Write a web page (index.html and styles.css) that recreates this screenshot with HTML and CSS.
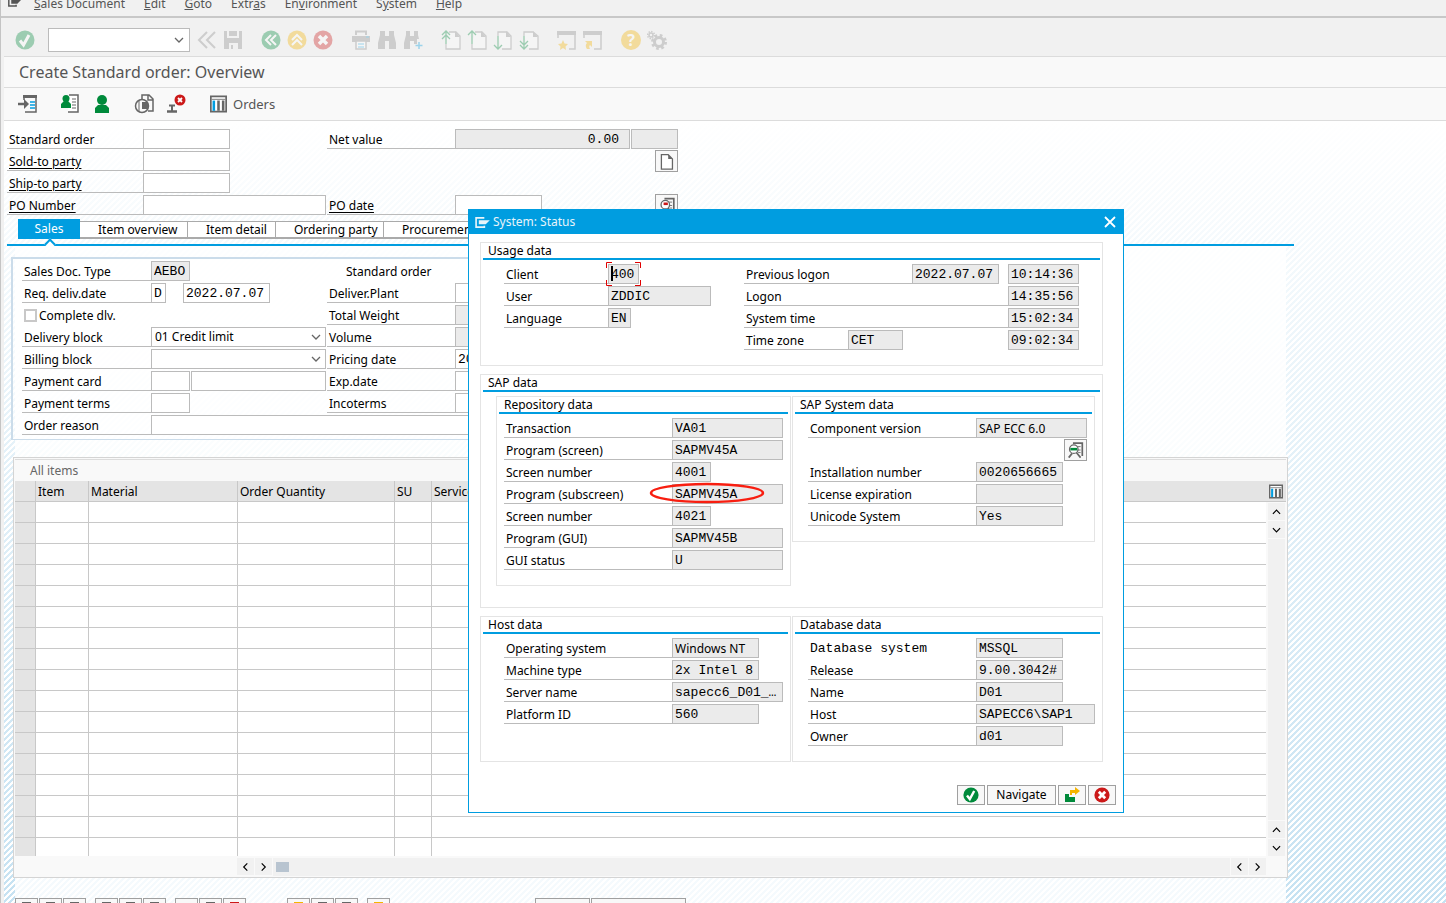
FILE: index.html
```html
<!DOCTYPE html>
<html lang="en">
<head>
  <meta charset="UTF-8">
  <title>Create Standard order: Overview</title>
  <link rel="stylesheet" href="styles.css">
</head>
<body>
<svg class="defs" aria-hidden="true">
  <symbol id="ok" viewBox="0 0 20 20"><circle cx="10" cy="10" r="9.5" fill="#008a3b"/><path d="M5 10.500l3.500 4.500L14 5" fill="none" stroke="#fff" stroke-width="3"/></symbol>
  <symbol id="cancel" viewBox="0 0 20 20"><circle cx="10" cy="10" r="9.500" fill="#cc1919"/><path d="M6 6l8 8M14 6l-8 8" stroke="#fff" stroke-width="3.500"/></symbol>
  <symbol id="page" viewBox="0 0 20 20"><path d="M4 2h8l5 5v12H4z" fill="#fff" stroke="#666" stroke-width="1.500"/><path d="M12 2v5h5z" fill="#666"/></symbol>
  <symbol id="find" viewBox="0 0 20 20"><path d="M3 1h5v5h4V1h5v4l2 8v6h-7v-8H8v8H1v-6l2-8z" fill="#8b8b8b"/></symbol>
  <symbol id="columns" viewBox="0 0 20 20"><path d="M1 1h18v18H1z" fill="#fff" stroke="#666" stroke-width="2"/><path d="M2 4.500h16" stroke="#666"/><path d="M4.500 6v12" stroke="#009de0" stroke-width="3"/><path d="M10 6v12M15.500 6v12" stroke="#666" stroke-width="3"/></symbol>
  <symbol id="chev" viewBox="0 0 10 6"><path d="M1 1l4 4 4-4" fill="none" stroke="currentColor" stroke-width="1.300"/></symbol>
  <symbol id="exit" viewBox="0 0 16 12"><path d="M10 1H1v10h9V9.500" fill="none" stroke="currentColor" stroke-width="1.800"/><path d="M4 3.500h12l-4.500 4.500H4z" fill="currentColor"/></symbol>
  <symbol id="lens" viewBox="0 0 20 20"><path d="M7 2h11v15" fill="none" stroke="#666" stroke-width="2"/><path d="M12 6h4M12 10h4M13 13h3" stroke="#666"/><circle cx="8" cy="9" r="5" fill="#fff" stroke="#666" stroke-width="1.500"/><path d="M11 13l5 6M6 14l-4 5" stroke="#666" stroke-width="2"/></symbol>
</svg>

<nav class="menubar">
  <svg class="menu-icon" width="13" height="10"><use href="#exit"/></svg>
  <a href="#"><u>S</u>ales Document</a>
  <a href="#"><u>E</u>dit</a>
  <a href="#"><u>G</u>oto</a>
  <a href="#">Extr<u>a</u>s</a>
  <a href="#">En<u>v</u>ironment</a>
  <a href="#">S<u>y</u>stem</a>
  <a href="#"><u>H</u>elp</a>
</nav>

<div class="toolbar">
  <button class="icon" aria-label="Enter"><svg><use href="#ok"/></svg></button>
  <div class="select command">
    <select aria-label="Command"><option></option></select>
    <svg><use href="#chev"/></svg>
  </div>
  <div class="group">
    <button class="icon" aria-label="Collapse"><svg viewBox="0 0 20 20"><path d="M10 2l-8 8 8 8M18 2l-8 8 8 8" fill="none" stroke="#8b8b8b" stroke-width="2"/></svg></button>
    <button class="icon" aria-label="Save"><svg viewBox="0 0 20 20"><path d="M1 1h3v7h12V1h3v18h-4v-6H6v6H1z" fill="#8b8b8b"/><path d="M6 1h8v5H6zM8 15h2v4H8z" fill="#8b8b8b"/></svg></button>
  </div>
  <div class="group">
    <button class="icon" aria-label="Back"><svg viewBox="0 0 20 20"><circle cx="10" cy="10" r="9.500" fill="#008a3b"/><path d="M10 5l-5 5 5 5M15 5l-5 5 5 5" fill="none" stroke="#fff" stroke-width="2"/></svg></button>
    <button class="icon" aria-label="Exit"><svg viewBox="0 0 20 20"><circle cx="10" cy="10" r="9.500" fill="#f5b400"/><path d="M5 10l5-5 5 5M5 15l5-5 5 5" fill="none" stroke="#fff" stroke-width="2"/></svg></button>
    <button class="icon" aria-label="Cancel"><svg><use href="#cancel"/></svg></button>
  </div>
  <div class="group">
    <button class="icon" aria-label="Print"><svg viewBox="0 0 20 20"><path d="M5 5V1.500h10V5" fill="none" stroke="#8b8b8b" stroke-width="2"/><path d="M1 6h18v6H1z" fill="#8b8b8b"/><path d="M5 11h10v8H5z" fill="#fff" stroke="#8b8b8b" stroke-width="1.500"/><path d="M7 14h6M7 17h6M15 7h3" stroke="#009de0"/></svg></button>
    <button class="icon" aria-label="Find"><svg><use href="#find"/></svg></button>
    <button class="icon" aria-label="Find next"><svg viewBox="0 0 20 20"><path d="M3 1h4v5h4V1h4v4l1 4h-2v5h-3v-3H7v8H1v-6l2-8z" fill="#8b8b8b"/><path d="M12.500 15.500h7M16 12v7" stroke="#009de0" stroke-width="1.500"/></svg></button>
  </div>
  <div class="group">
    <button class="icon" aria-label="First page"><svg viewBox="0 0 20 20"><path d="M8 2h7l4 4v13H5v-5" fill="#fff" stroke="#8b8b8b" stroke-width="1.300"/><path d="M14 1v6h5z" fill="#8b8b8b"/><path d="M5 14V2M1 5l4-4 4 4M1 9l4-4 4 4" fill="none" stroke="#008a3b" stroke-width="1.300"/></svg></button>
    <button class="icon" aria-label="Previous page"><svg viewBox="0 0 20 20"><path d="M8 2h7l4 4v13H5v-5" fill="#fff" stroke="#8b8b8b" stroke-width="1.300"/><path d="M14 1v6h5z" fill="#8b8b8b"/><path d="M5 14V2M1 5l4-4 4 4" fill="none" stroke="#008a3b" stroke-width="1.300"/></svg></button>
    <button class="icon" aria-label="Next page"><svg viewBox="0 0 20 20"><path d="M5 6V2h9l4 4v13H9" fill="#fff" stroke="#8b8b8b" stroke-width="1.300"/><path d="M13 1v6h5z" fill="#8b8b8b"/><path d="M5 6v13M1 15l4 4 4-4" fill="none" stroke="#008a3b" stroke-width="1.300"/></svg></button>
    <button class="icon" aria-label="Last page"><svg viewBox="0 0 20 20"><path d="M5 6V2h9l5 4v13h-9" fill="#fff" stroke="#8b8b8b" stroke-width="1.300"/><path d="M14 1v6h5z" fill="#8b8b8b"/><path d="M5 6v13M1 11l4 4 4-4M1 15l4 4 4-4" fill="none" stroke="#008a3b" stroke-width="1.300"/></svg></button>
  </div>
  <div class="group">
    <button class="icon" aria-label="New session"><svg viewBox="0 0 20 20"><path d="M1 8V3h17v16h-6" fill="none" stroke="#8b8b8b" stroke-width="1.500"/><path d="M0 1h19v4H0z" fill="#8b8b8b"/><path d="M6 10l1.500 3.500 3.500.5-2.500 2.500.5 3.500-3-2-3 2 .5-3.500L1 14l3.500-.5z" fill="#f5b400"/></svg></button>
    <button class="icon" aria-label="Create shortcut"><svg viewBox="0 0 20 20"><path d="M1 8V3h17v16h-7" fill="none" stroke="#8b8b8b" stroke-width="1.500"/><path d="M0 1h19v4H0z" fill="#8b8b8b"/><path d="M2 11h7v6l-2-2c-1 1-1 2 0 4H4c-2-3-1-5 0-6z" fill="#f5b400"/></svg></button>
  </div>
  <div class="group">
    <button class="icon help" aria-label="Help">?</button>
    <button class="icon" aria-label="Customize layout"><svg viewBox="0 0 20 20" fill="none" stroke="#8b8b8b"><circle cx="12" cy="12" r="4.500" stroke-width="3"/><circle cx="12" cy="12" r="6.500" stroke-width="3" stroke-dasharray="2.550 2.550"/><circle cx="4" cy="5" r="2" stroke-width="1.500"/><circle cx="4" cy="5" r="3.500" stroke-width="1.500" stroke-dasharray="1.400 1.300"/></svg></button>
  </div>
</div>

<h1>Create Standard order: Overview</h1>

<div class="appbar">
  <button class="icon wide" aria-label="Expand"><svg viewBox="0 0 20 20"><path d="M6 2h12v16H7M6 2v4" fill="none" stroke="#666" stroke-width="1.500"/><path d="M5 1h14v3H5z" fill="#666"/><path d="M0 10h7" stroke="#666" stroke-width="2.500"/><path d="M6 5l5 5-5 5z" fill="#666"/><path d="M12 8h5M12 11h5M12 14h5" stroke="#009de0" stroke-width="1.500"/></svg></button>
  <button class="icon" aria-label="Header partners"><svg viewBox="0 0 20 20"><path d="M9 1h9v17H8" fill="#fff" stroke="#666" stroke-width="1.500"/><path d="M12 5h4M12 8h4M12 11h4M12 14h4" stroke="#666"/><circle cx="6" cy="4.500" r="3.500" fill="#008a3b"/><path d="M1 14v-4l3-3h4l3 3v4z" fill="#008a3b"/></svg></button>
  <button class="icon wide" aria-label="Sold-to party"><svg viewBox="0 0 20 20"><circle cx="10" cy="6" r="5" fill="#008a3b"/><path d="M3 19v-5l3-3h8l3 3v5z" fill="#008a3b"/></svg></button>
  <button class="icon" aria-label="Availability"><svg viewBox="0 0 20 20"><path d="M8 5V1h7l4 4v12h-5M14 1v5h5" fill="none" stroke="#666" stroke-width="1.500"/><circle cx="8" cy="12" r="6.500" fill="none" stroke="#666" stroke-width="1.500"/><path d="M8 8h6v7H8z" fill="#666"/><path d="M5 6v12" stroke="#666"/></svg></button>
  <button class="icon wide" aria-label="Reject document"><svg viewBox="0 0 20 20"><path d="M1 17.500h10" stroke="#666" stroke-width="2.500"/><path d="M6 17v-5M3 11.500h6" stroke="#666" stroke-width="2"/><circle cx="14" cy="6" r="5.500" fill="#cc1919"/><path d="M12 4l4 4M16 4l-4 4" stroke="#fff" stroke-width="1.800"/></svg></button>
  <button class="orders"><svg width="17" height="18"><use href="#columns"/></svg>Orders</button>
</div>

<main>
  <form class="head">
    <div class="row">
      <div class="left"><label for="order">Standard order</label><input id="order" class="w87"></div>
      <label for="net">Net value</label><input id="net" class="w175 gray num" value="0.00" readonly><input class="w47 gray next" aria-label="Currency" readonly>
    </div>
    <div class="row">
      <div class="left"><label for="sold"><u>Sold-to party</u></label><input id="sold" class="w87"></div>
      <button type="button" class="btn sq" aria-label="New document"><svg width="17" height="17"><use href="#page"/></svg></button>
    </div>
    <div class="row">
      <div class="left"><label for="ship"><u>Ship-to party</u></label><input id="ship" class="w87"></div>
    </div>
    <div class="row">
      <div class="left"><label for="po"><u>PO Number</u></label><input id="po" class="w183"></div>
      <label for="podate"><u>PO date</u></label><input id="podate" class="w87">
      <button type="button" class="btn sq" aria-label="Display"><svg width="18" height="17" viewBox="0 0 20 20"><use href="#lens"/><path d="M6 8h5" stroke="#cc1919" stroke-width="3"/></svg></button>
    </div>
  </form>

  <div class="tabs">
    <button class="active">Sales</button>
    <button class="t108">Item overview</button>
    <button class="t88">Item detail</button>
    <button class="t108">Ordering party</button>
    <button class="t108">Procurement</button>
  </div>

  <div class="detail">
    <form class="panel">
      <div class="row">
        <div class="left"><label for="type">Sales Doc. Type</label><input id="type" class="w39 gray" value="AEBO" readonly></div>
        <span class="type-text">Standard order</span>
      </div>
      <div class="row">
        <div class="left"><label for="req">Req. deliv.date</label><input id="req" class="w15" value="D"><input class="w87 date" aria-label="Delivery date" value="2022.07.07"></div>
        <label for="plant">Deliver.Plant</label><input id="plant" class="w87">
      </div>
      <div class="row">
        <div class="left"><input type="checkbox" id="complete"><label for="complete" class="plain">Complete dlv.</label></div>
        <label for="weight">Total Weight</label><input id="weight" class="w175 gray" readonly>
      </div>
      <div class="row">
        <div class="left"><label for="dblock">Delivery block</label><div class="select"><select id="dblock"><option>01 Credit limit</option></select><svg><use href="#chev"/></svg></div></div>
        <label for="volume">Volume</label><input id="volume" class="w175 gray" readonly>
      </div>
      <div class="row">
        <div class="left"><label for="bblock">Billing block</label><div class="select"><select id="bblock"><option></option></select><svg><use href="#chev"/></svg></div></div>
        <label for="pricing">Pricing date</label><input id="pricing" class="w87" value="2022.07.07">
      </div>
      <div class="row">
        <div class="left"><label for="card">Payment card</label><input id="card" class="w39"><input class="w135 next" aria-label="Card number"></div>
        <label for="exp">Exp.date</label><input id="exp" class="w87">
      </div>
      <div class="row">
        <div class="left"><label for="terms">Payment terms</label><input id="terms" class="w39"></div>
        <label for="inco">Incoterms</label><input id="inco" class="w87">
      </div>
      <div class="row">
        <label for="reason">Order reason</label><input id="reason" class="w479">
      </div>
    </form>

    <section class="items">
      <h2>All items</h2>
      <div class="grid">
        <table>
          <colgroup><col class="c1"><col class="c2"><col class="c3"><col class="c4"><col class="c5"><col></colgroup>
          <thead><tr><th></th><th>Item</th><th>Material</th><th>Order Quantity</th><th>SU</th><th>Service</th></tr></thead>
          <tbody id="rows"></tbody>
        </table>
        <div class="vscroll">
          <button class="config" aria-label="Configure columns"><svg width="14" height="15"><use href="#columns"/></svg></button>
          <button class="arrow up" aria-label="Scroll up"><svg><use href="#chev"/></svg></button>
          <button class="arrow" aria-label="Scroll down"><svg><use href="#chev"/></svg></button>
          <div class="track"></div>
          <button class="arrow up" aria-label="Page up"><svg><use href="#chev"/></svg></button>
          <button class="arrow" aria-label="Page down"><svg><use href="#chev"/></svg></button>
        </div>
      </div>
      <div class="hscroll">
        <button class="arrow prev" aria-label="Scroll left"><svg><use href="#chev"/></svg></button>
        <button class="arrow fwd" aria-label="Scroll right"><svg><use href="#chev"/></svg></button>
        <div class="track"><div class="thumb"></div></div>
        <button class="arrow prev" aria-label="Page left"><svg><use href="#chev"/></svg></button>
        <button class="arrow fwd" aria-label="Page right"><svg><use href="#chev"/></svg></button>
      </div>
    </section>

    <div class="footbar">
      <div><button class="btn dark"></button><button class="btn dark"></button><button class="btn dark"></button></div>
      <div><button class="btn dark"></button><button class="btn dark"></button><button class="btn dark"></button></div>
      <div><button class="btn"></button><button class="btn dark"></button><button class="btn red"></button></div>
      <div class="apart"><button class="btn yellow"></button><button class="btn dark"></button><button class="btn dark"></button></div>
      <div><button class="btn yellow"></button></div>
      <div class="texts"><button class="btn w55"></button><button class="btn w95"></button></div>
    </div>
  </div>
</main>

<div class="dialog" role="dialog" aria-labelledby="dlg-title">
  <header>
    <svg width="15" height="11"><use href="#exit"/></svg>
    <span id="dlg-title">System: Status</span>
    <button aria-label="Close"><svg width="12" height="12" viewBox="0 0 12 12"><path d="M1 1l10 10M11 1L1 11" stroke="#fff" stroke-width="1.800"/></svg></button>
  </header>
  <div class="content">
    <section class="box usage">
      <h3>Usage data</h3>
      <div class="cols">
        <div class="rows">
          <div class="row"><label for="client">Client</label><div class="focus"><input id="client" class="w31 gray" value="400" readonly><svg viewBox="0 0 35 24"><path d="M6 .5H.5V6M29 .5h5.500V6M6 23.500H.5V18M29 23.500h5.500V18" fill="none" stroke="#e00000"/><path d="M6 4v15" stroke="#000" stroke-width="2"/></svg></div></div>
          <div class="row"><label for="user">User</label><input id="user" class="w103 gray" value="ZDDIC" readonly></div>
          <div class="row"><label for="lang">Language</label><input id="lang" class="w23 gray" value="EN" readonly></div>
        </div>
        <div class="rows times">
          <div class="row"><label for="prev">Previous logon</label><input id="prev" class="w87 gray" value="2022.07.07" readonly><input class="w71 gray time" aria-label="Previous logon time" value="10:14:36" readonly></div>
          <div class="row"><label for="logon" class="long">Logon</label><input id="logon" class="w71 gray" value="14:35:56" readonly></div>
          <div class="row"><label for="systime" class="long">System time</label><input id="systime" class="w71 gray" value="15:02:34" readonly></div>
          <div class="row"><label for="zone" class="short">Time zone</label><input id="zone" class="w55 gray" value="CET" readonly><input class="w71 gray zone-time" aria-label="Local time" value="09:02:34" readonly></div>
        </div>
      </div>
    </section>

    <section class="box sap">
      <h3>SAP data</h3>
      <div class="pair">
        <section class="box repo">
          <h3>Repository data</h3>
          <div class="rows">
            <div class="row"><label for="tcode">Transaction</label><input id="tcode" class="w111 gray" value="VA01" readonly></div>
            <div class="row"><label for="prog">Program (screen)</label><input id="prog" class="w111 gray" value="SAPMV45A" readonly></div>
            <div class="row"><label for="scr">Screen number</label><input id="scr" class="w39 gray" value="4001" readonly></div>
            <div class="row marked"><label for="sub">Program (subscreen)</label><input id="sub" class="w111 gray" value="SAPMV45A" readonly><svg class="mark" viewBox="0 0 116 22"><ellipse cx="58" cy="11" rx="56" ry="9" fill="none" stroke="#f81e10" stroke-width="2.500"/></svg></div>
            <div class="row"><label for="subscr">Screen number</label><input id="subscr" class="w39 gray" value="4021" readonly></div>
            <div class="row"><label for="gui">Program (GUI)</label><input id="gui" class="w111 gray" value="SAPMV45B" readonly></div>
            <div class="row"><label for="status">GUI status</label><input id="status" class="w111 gray" value="U" readonly></div>
          </div>
        </section>
        <section class="box sys">
          <h3>SAP System data</h3>
          <div class="rows">
            <div class="row"><label for="comp">Component version</label><input id="comp" class="w111 gray sans" value="SAP ECC 6.0" readonly></div>
            <div class="row"><button class="btn sq" aria-label="Component details"><svg width="17" height="18" viewBox="0 0 20 20"><use href="#lens"/><path d="M4 9h8" stroke="#008a3b" stroke-width="3"/></svg></button></div>
            <div class="row"><label for="inst">Installation number</label><input id="inst" class="w87 gray" value="0020656665" readonly></div>
            <div class="row"><label for="lic">License expiration</label><input id="lic" class="w87 gray" readonly></div>
            <div class="row"><label for="uni">Unicode System</label><input id="uni" class="w87 gray" value="Yes" readonly></div>
          </div>
        </section>
      </div>
    </section>

    <div class="pair">
      <section class="box host">
        <h3>Host data</h3>
        <div class="rows">
          <div class="row"><label for="os">Operating system</label><input id="os" class="w87 gray sans" value="Windows NT" readonly></div>
          <div class="row"><label for="machine">Machine type</label><input id="machine" class="w87 gray" value="2x Intel 8" readonly></div>
          <div class="row"><label for="server">Server name</label><input id="server" class="w111 gray" value="sapecc6_D01_…" readonly></div>
          <div class="row"><label for="platform">Platform ID</label><input id="platform" class="w87 gray" value="560" readonly></div>
        </div>
      </section>
      <section class="box db">
        <h3>Database data</h3>
        <div class="rows">
          <div class="row"><label for="dbsys" class="mono">Database system</label><input id="dbsys" class="w87 gray" value="MSSQL" readonly></div>
          <div class="row"><label for="release">Release</label><input id="release" class="w87 gray" value="9.00.3042#" readonly></div>
          <div class="row"><label for="dbname">Name</label><input id="dbname" class="w87 gray" value="D01" readonly></div>
          <div class="row"><label for="dbhost">Host</label><input id="dbhost" class="w119 gray" value="SAPECC6\SAP1" readonly></div>
          <div class="row"><label for="owner">Owner</label><input id="owner" class="w87 gray" value="d01" readonly></div>
        </div>
      </section>
    </div>
  </div>
  <footer>
    <button class="btn" aria-label="Continue"><svg width="16" height="16"><use href="#ok"/></svg></button>
    <button class="btn nav">Navigate</button>
    <button class="btn" aria-label="Go to"><svg width="16" height="16" viewBox="0 0 16 16"><path d="M1 7h4v3h6v5H1z" fill="#008a3b"/><path d="M6 8V3h5V0l5 4-5 4V6H8v2z" fill="#f5b400"/></svg></button>
    <button class="btn" aria-label="Cancel dialog"><svg width="16" height="16"><use href="#cancel"/></svg></button>
  </footer>
</div>

<script>
  var rows = document.getElementById('rows')
  for (var i = 0; i < 17; i++) {
    var tr = rows.insertRow()
    for (var j = 0; j < 6; j++) {
      tr.insertCell()
    }
  }
</script>
</body>
</html>
```
FILE: styles.css
```css
* {
  box-sizing: border-box;
}

body, h1, h2, h3 {
  margin: 0;
  font-weight: normal;
}

body {
  display: flex;
  flex-direction: column;
  height: 100vh;
  overflow: hidden;
  border-left: 1px solid #c4c4c4;
  background: #f1f1f1;
  color: #000;
  font: 12px/20px "Noto Sans", "Open Sans", sans-serif;
}

button, input, select {
  margin: 0;
  padding: 0;
  border: 0;
  border-radius: 0;
  background: none;
  color: inherit;
  font: inherit;
}

svg {
  display: block;
  flex: none;
}

.defs {
  position: absolute;
  width: 0;
  height: 0;
}

/* menu and toolbars */
.menubar {
  display: flex;
  flex: none;
  gap: 19px;
  height: 18px;
  padding-left: 7px;
  border-bottom: 2px solid #c8c8c8;
  color: #555;
  font-size: 12px;
  line-height: 7px;
}

.menubar a {
  color: inherit;
  text-decoration: none;
}

.menu-icon {
  margin: -3px -6px 0 0;
}

.toolbar {
  display: flex;
  flex: none;
  align-items: center;
  height: 39px;
  margin-left: 3px;
  padding: 5px 0 0 11px;
  border-bottom: 1px solid #dcdcdc;
}

.icon {
  width: 20px;
  height: 20px;
}

.icon svg {
  width: 20px;
  height: 20px;
}

.toolbar .icon {
  opacity: .35;
}

.group {
  display: flex;
  gap: 6px;
  margin-right: 18px;
}

.toolbar .help {
  border-radius: 50%;
  background: #f5b400;
  color: #fff;
  font-size: 16px;
  font-weight: bold;
}

.select {
  position: relative;
  width: 175px;
}

.select select {
  display: block;
  width: 100%;
  height: 20px;
  padding: 0 3px;
  border: 1px solid #bbb;
  background: #fff;
  line-height: 18px;
  appearance: none;
}

.select svg {
  position: absolute;
  top: 7px;
  right: 5px;
  width: 10px;
  height: 6px;
  color: #666;
  pointer-events: none;
}

.command {
  width: 142px;
  margin: 0 7px 0 13px;
}

.command select {
  height: 24px;
}

.command svg {
  top: 9px;
  right: 6px;
}

h1 {
  flex: none;
  height: 31px;
  margin-left: 3px;
  padding-left: 15px;
  border-bottom: 1px solid #dcdcdc;
  background: #f9f9f9;
  color: #555;
  font-size: 16px;
  line-height: 30px;
}

.appbar {
  display: flex;
  flex: none;
  align-items: center;
  gap: 12px;
  height: 33px;
  margin-left: 3px;
  padding-left: 14px;
  border-bottom: 1px solid #dcdcdc;
  background: #f9f9f9;
}

.appbar .wide {
  margin-right: 10px;
}

.orders {
  display: flex;
  align-items: center;
  gap: 6px;
  margin-left: 2px;
  color: #555;
  font-size: 13px;
}

/* work area */
main {
  flex: 1;
  min-height: 0;
  margin-left: 3px;
  padding-top: 8px;
  background: linear-gradient(#fff, rgba(255, 255, 255, .5) 45%, rgba(255, 255, 255, 0)),
    linear-gradient(135deg, #c6e2f2 25%, #fff 25%, #fff 50%, #c6e2f2 50%, #c6e2f2 75%, #fff 75%) 0 0 / 6px 6px;
}

.row {
  display: flex;
  height: 20px;
  margin-bottom: 2px;
  line-height: 22px;
}

.row label {
  flex: none;
  width: 128px;
  padding-left: 2px;
  border-bottom: 1px solid #bbb;
  white-space: nowrap;
}

.row u {
  text-underline-offset: 2px;
}

.row input {
  flex: none;
  height: 20px;
  padding: 1px 2px 0;
  border: 1px solid #bbb;
  background: #fff;
  font: 13px/17px "Liberation Mono", monospace;
}

.row .gray {
  background: #ebebeb;
}

.row .sans {
  font: 12px/17px "Noto Sans", "Open Sans", sans-serif;
}

.row .num {
  padding-right: 10px;
  text-align: right;
}

.row .next {
  margin-left: 1px;
}

.left {
  display: flex;
}

.w15 { width: 15px; }
.w23 { width: 23px; }
.w31 { width: 31px; }
.w39 { width: 39px; }
.w47 { width: 47px; }
.w55 { width: 55px; }
.w71 { width: 71px; }
.w87 { width: 87px; }
.w95 { width: 95px; }
.w103 { width: 103px; }
.w111 { width: 111px; }
.w119 { width: 119px; }
.w135 { width: 135px; }
.w175 { width: 175px; }
.w183 { width: 183px; }
.w479 { width: 479px; }

.btn {
  display: flex;
  align-items: center;
  justify-content: center;
  border: 1px solid #a0a0a0;
  background: #f8f8f8;
}

.sq {
  flex: none;
  width: 23px;
  height: 22px;
  margin: -1px 0 -1px auto;
}

.head {
  width: 674px;
  padding-left: 3px;
}

.head .left {
  width: 320px;
}

.head .left label {
  width: 136px;
}

.tabs {
  position: relative;
  display: flex;
  align-items: flex-end;
  height: 29px;
  margin: 2px 152px 0 3px;
  padding: 0 0 5px 11px;
  border-bottom: 2px solid #009de0;
}

.tabs button {
  height: 18px;
  padding-left: 18px;
  border: 1px solid #aaa;
  border-width: 1px 1px 2px 0;
  background: #fff;
  line-height: 15px;
  text-align: left;
}

.tabs .active {
  width: 62px;
  height: 20px;
  padding: 0;
  border: 0;
  background: #009de0;
  color: #fff;
  line-height: 20px;
  text-align: center;
}

.tabs::after {
  position: absolute;
  bottom: -4px;
  left: 39px;
  width: 6px;
  height: 6px;
  border: 2px solid #009de0;
  border-width: 2px 0 0 2px;
  background: #fff;
  content: "";
  transform: rotate(45deg);
}

.t88 { width: 88px; }
.t108 { width: 108px; }

.detail {
  margin: 0 160px 0 11px;
  padding-top: 11px;
  background: rgba(255, 255, 255, .82);
}

.panel {
  max-width: 1080px;
  margin-left: -4px;
  padding: 2px 0 2px 9px;
  border: 2px solid #cbdcea;
  border-width: 2px 2px 1px;
  background: rgba(255, 255, 255, .5);
}

.panel .left {
  width: 305px;
}

.panel .left label,
.panel > .row > label[for="reason"] {
  width: 129px;
}

.row .date {
  margin-left: 17px;
}

.type-text {
  padding-left: 19px;
}

.row input[type="checkbox"] {
  width: 13px;
  height: 13px;
  margin: 4px 0 0 2px;
  border: 2px solid #c8c8c8;
  appearance: none;
}

.row .plain {
  border: 0;
}

/* item table */
.items {
  margin: 17px -2px 20px;
  border: 1px solid #d4d4d4;
  background: #f9f9f9;
}

.items h2 {
  height: 22px;
  margin: 1px 1px 0;
  padding-left: 15px;
  border-top: 1px solid #dcdcdc;
  color: #666;
  font-size: 12px;
  line-height: 21px;
}

.grid {
  display: flex;
  margin: 0 1px;
}

table {
  flex: 1;
  min-width: 0;
  border-spacing: 0;
  table-layout: fixed;
}

.c1 { width: 21px; }
.c2 { width: 53px; }
.c3 { width: 149px; }
.c4 { width: 157px; }
.c5 { width: 37px; }

th, td {
  height: 21px;
  padding: 0 2px;
  border: 1px solid #c8c8c8;
  border-width: 0 1px 1px 0;
  background: #fff;
}

th {
  background: #e4e4e4;
  font-weight: normal;
  line-height: 19px;
  text-align: left;
}

td:first-child {
  background: #e4e4e4;
}

th:last-child, td:last-child {
  border-right: 0;
}

tbody tr:last-child td {
  height: 18px;
  border-bottom: 0;
}

.vscroll {
  display: flex;
  flex-direction: column;
  gap: 1px;
  width: 20px;
  padding: 0 1px 0 2px;
}

.config {
  display: flex;
  align-items: center;
  justify-content: center;
  height: 21px;
  margin: 0 -1px 0 -2px;
  border-bottom: 1px solid #c8c8c8;
  background: #e4e4e4;
}

.arrow {
  display: flex;
  flex: none;
  align-items: center;
  justify-content: center;
  width: 17px;
  height: 17px;
  background: #f1f1f1;
}

.arrow svg {
  width: 9px;
  height: 6px;
}

.up svg { transform: rotate(180deg); }
.prev svg { transform: rotate(90deg); }
.fwd svg { transform: rotate(-90deg); }

.track {
  flex: 1;
  background: #f1f1f1;
}

.hscroll {
  display: flex;
  gap: 1px;
  margin: 2px 21px 1px 223px;
}

.thumb {
  width: 13px;
  height: 10px;
  margin: 4px 3px;
  background: #b8c4d0;
}

.footbar {
  display: flex;
  gap: 9px;
}

.footbar div {
  display: flex;
  gap: 1px;
}

.footbar .btn {
  align-items: flex-start;
  width: 23px;
  height: 22px;
  padding-top: 3px;
}

.footbar .apart { margin-left: 32px; }
.footbar .texts { margin-left: 136px; }
.footbar .w55.btn { width: 55px; }
.footbar .w95.btn { width: 95px; }

.dark::before, .red::before, .yellow::before {
  width: 9px;
  height: 10px;
  background: #666;
  content: "";
}

.red::before { background: #cc1919; }
.yellow::before { background: #f5b400; }

/* status window */
.dialog {
  position: absolute;
  top: 209px;
  left: 468px;
  width: 656px;
  border: 1px solid #009de0;
  background: #fff;
}

.dialog header {
  display: flex;
  align-items: center;
  gap: 3px;
  height: 24px;
  padding: 0 7px 0 6px;
  background: #009de0;
  color: #e8f4fa;
}

.dialog header button {
  margin-left: auto;
}

.content {
  display: flex;
  flex-direction: column;
  gap: 8px;
  padding: 8px 20px 0 11px;
}

.box {
  border: 1px solid #e4e4e4;
}

.box h3 {
  height: 17px;
  margin: 0 2px 4px;
  padding-left: 5px;
  border-bottom: 2px solid #009de0;
  font-size: 12px;
  line-height: 15px;
}

.usage {
  height: 124px;
}

.sap {
  height: 234px;
}

.cols, .pair {
  display: flex;
  align-items: flex-start;
}

.rows {
  padding-left: 23px;
}

.box .row label {
  width: 168px;
}

.usage .row label,
.usage .row .short {
  width: 104px;
}

.usage .times label {
  width: 168px;
}

.usage .row .long {
  width: 264px;
}

.times {
  margin-left: 10px;
}

.cols .rows:first-child {
  width: 230px;
}

.row .time {
  margin-left: 9px;
}

.row .zone-time {
  margin-left: 105px;
}

.row .mono {
  border: 0;
  font: 13px/21px "Liberation Mono", monospace;
}

.focus {
  position: relative;
  line-height: 20px;
}

.focus input {
  display: block;
}

.focus svg {
  position: absolute;
  top: -2px;
  left: -2px;
  width: 35px;
  height: 24px;
}

.marked {
  position: relative;
}

.mark {
  position: absolute;
  top: -2px;
  left: 145px;
  width: 116px;
  height: 22px;
}

.pair {
  gap: 1px;
}

.sap .pair {
  padding-left: 15px;
}

.sap .rows {
  padding-left: 7px;
}

.repo {
  width: 295px;
  height: 190px;
}

.sys {
  width: 303px;
  height: 146px;
}

.sap .sys .rows,
.db .rows {
  padding: 0 7px 0 15px;
}

.host, .db {
  width: 311px;
  height: 146px;
}

.dialog footer {
  display: flex;
  gap: 2px;
  justify-content: flex-end;
  padding: 23px 7px 7px;
}

.dialog footer .btn {
  width: 28px;
  height: 20px;
}

.dialog footer .nav {
  width: 69px;
}
```
